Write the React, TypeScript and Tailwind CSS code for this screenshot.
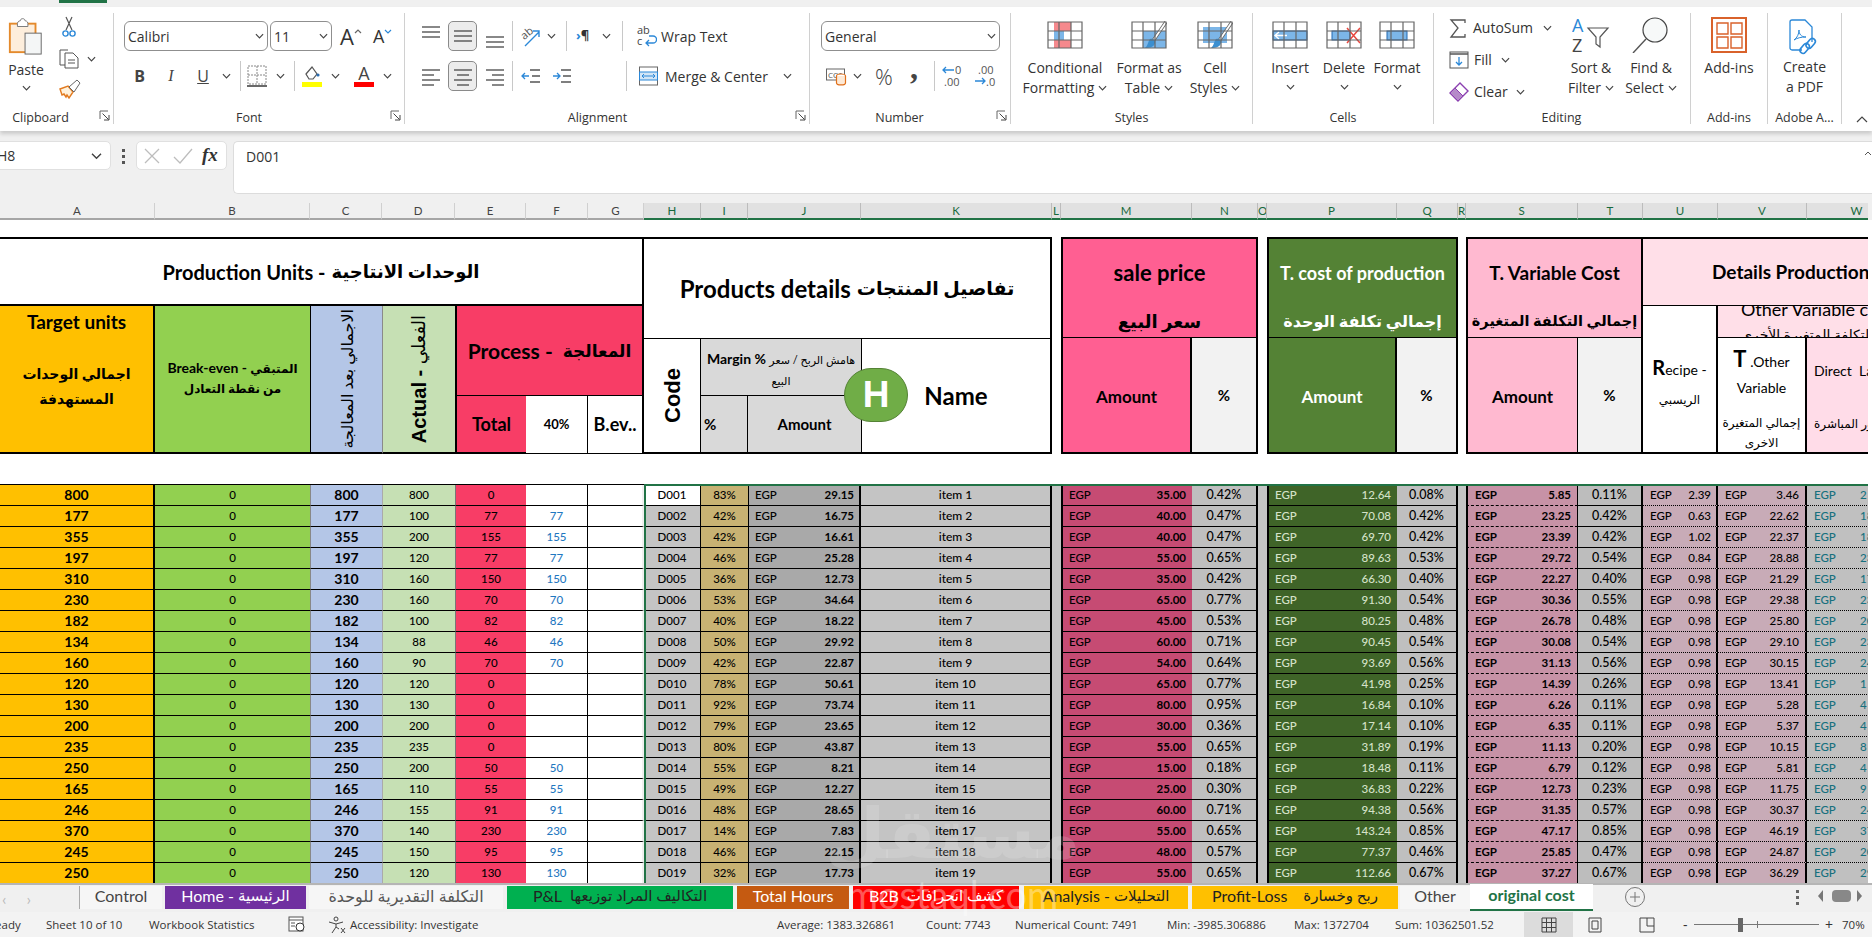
import type { ReactNode } from 'react';

const COLS =
  'grid-cols-[155px_155px_72px_73px_71px_62px_56px_57px_47px_113px_191px_9px_131px_66px_9px_130px_61px_8px_112px_65px_75px_89px_100px]';

const LETTERS: [string, string][] = [
  ['A', 'w-[155px]'], ['B', 'w-[155px]'], ['C', 'w-[72px]'], ['D', 'w-[73px]'], ['E', 'w-[71px]'], ['F', 'w-[62px]'],
  ['G', 'w-[56px]'], ['H', 'w-[57px]'], ['I', 'w-[47px]'], ['J', 'w-[113px]'], ['K', 'w-[191px]'], ['L', 'w-[9px]'],
  ['M', 'w-[131px]'], ['N', 'w-[66px]'], ['O', 'w-[9px]'], ['P', 'w-[130px]'], ['Q', 'w-[61px]'], ['R', 'w-[8px]'],
  ['S', 'w-[112px]'], ['T', 'w-[65px]'], ['U', 'w-[75px]'], ['V', 'w-[89px]'], ['W', 'w-[100px]'],
];

// target, total, actual, process, blue, margin, amount, price, price%, cost, cost%, var, var%, recipe, other, direct
const ROWS: string[][] = [
  ['800', '800', '800', '0', '', '83%', '29.15', '35.00', '0.42%', '12.64', '0.08%', '5.85', '0.11%', '2.39', '3.46', '2'],
  ['177', '177', '100', '77', '77', '42%', '16.75', '40.00', '0.47%', '70.08', '0.42%', '23.25', '0.42%', '0.63', '22.62', '18'],
  ['355', '355', '200', '155', '155', '42%', '16.61', '40.00', '0.47%', '69.70', '0.42%', '23.39', '0.42%', '1.02', '22.37', '18'],
  ['197', '197', '120', '77', '77', '46%', '25.28', '55.00', '0.65%', '89.63', '0.53%', '29.72', '0.54%', '0.84', '28.88', '23'],
  ['310', '310', '160', '150', '150', '36%', '12.73', '35.00', '0.42%', '66.30', '0.40%', '22.27', '0.40%', '0.98', '21.29', '17'],
  ['230', '230', '160', '70', '70', '53%', '34.64', '65.00', '0.77%', '91.30', '0.54%', '30.36', '0.55%', '0.98', '29.38', '23'],
  ['182', '182', '100', '82', '82', '40%', '18.22', '45.00', '0.53%', '80.25', '0.48%', '26.78', '0.48%', '0.98', '25.80', '20'],
  ['134', '134', '88', '46', '46', '50%', '29.92', '60.00', '0.71%', '90.45', '0.54%', '30.08', '0.54%', '0.98', '29.10', '23'],
  ['160', '160', '90', '70', '70', '42%', '22.87', '54.00', '0.64%', '93.69', '0.56%', '31.13', '0.56%', '0.98', '30.15', '24'],
  ['120', '120', '120', '0', '', '78%', '50.61', '65.00', '0.77%', '41.98', '0.25%', '14.39', '0.26%', '0.98', '13.41', '1'],
  ['130', '130', '130', '0', '', '92%', '73.74', '80.00', '0.95%', '16.84', '0.10%', '6.26', '0.11%', '0.98', '5.28', '4'],
  ['200', '200', '200', '0', '', '79%', '23.65', '30.00', '0.36%', '17.14', '0.10%', '6.35', '0.11%', '0.98', '5.37', '4'],
  ['235', '235', '235', '0', '', '80%', '43.87', '55.00', '0.65%', '31.89', '0.19%', '11.13', '0.20%', '0.98', '10.15', '8'],
  ['250', '250', '200', '50', '50', '55%', '8.21', '15.00', '0.18%', '18.48', '0.11%', '6.79', '0.12%', '0.98', '5.81', '4'],
  ['165', '165', '110', '55', '55', '49%', '12.27', '25.00', '0.30%', '36.83', '0.22%', '12.73', '0.23%', '0.98', '11.75', '9'],
  ['246', '246', '155', '91', '91', '48%', '28.65', '60.00', '0.71%', '94.38', '0.56%', '31.35', '0.57%', '0.98', '30.37', '24'],
  ['370', '370', '140', '230', '230', '14%', '7.83', '55.00', '0.65%', '143.24', '0.85%', '47.17', '0.85%', '0.98', '46.19', '37'],
  ['245', '245', '150', '95', '95', '46%', '22.15', '48.00', '0.57%', '77.37', '0.46%', '25.85', '0.47%', '0.98', '24.87', '20'],
  ['250', '250', '120', '130', '130', '32%', '17.73', '55.00', '0.65%', '112.66', '0.67%', '37.27', '0.67%', '0.98', '36.29', '29'],
];

function Chev({ className = '' }: { className?: string }) {
  return (
    <svg viewBox="0 0 10 6" className={`h-[6px] w-[9px] shrink-0 ${className}`}>
      <path d="M1 1l4 4 4-4" fill="none" stroke="#444" strokeWidth="1.3" />
    </svg>
  );
}

function Sep() {
  return <div className="h-[30px] w-px shrink-0 bg-[#c8c8c8]" />;
}

function Launcher() {
  return (
    <svg viewBox="0 0 11 11" className="absolute right-[3px] top-[1px] h-[11px] w-[11px]">
      <path d="M1 9V1h8" fill="none" stroke="#666" />
      <path d="M3.5 3.5L9.5 9.5M5 10h5V5" fill="none" stroke="#444" />
    </svg>
  );
}

function Group({ className, label, labelPad = '', launcher, children }: { className: string; label: string; labelPad?: string; launcher?: boolean; children: ReactNode }) {
  return (
    <section className={`flex h-[111px] shrink-0 flex-col border-r border-[#d0d0d0] ${className}`}>
      <div className="h-[96px] overflow-visible">{children}</div>
      <div className={`relative h-[15px] text-center text-[12.5px] leading-[18px] text-[#333] ${labelPad}`}>
        {label}
        {launcher && <Launcher />}
      </div>
    </section>
  );
}

function BigButton({ className, icon, lines, chevOwnLine }: { className: string; icon: ReactNode; lines: string[]; chevOwnLine?: boolean }) {
  return (
    <div className={`flex shrink-0 flex-col items-center whitespace-nowrap pt-[4px] text-[14px] leading-[20px] text-[#333] ${className}`}>
      <div className="flex h-[38px] items-start">{icon}</div>
      <div className="mt-[3px]">{lines[0]}</div>
      {chevOwnLine ? (
        <Chev className="mt-[6px]" />
      ) : (
        <div className="flex items-center gap-[4px]">
          {lines[1]}
          <Chev />
        </div>
      )}
    </div>
  );
}

function AlignLines({ ys, align, className = '' }: { ys: number[]; align: 'l' | 'c' | 'r' | 'f'; className?: string }) {
  return (
    <svg viewBox="0 0 18 24" className={`h-[24px] w-[18px] shrink-0 ${className}`}>
      {ys.map((y, i) => {
        const short = align !== 'f' && i % 2 === 1;
        const x1 = short && align === 'r' ? 6 : short && align === 'c' ? 3 : 0;
        const x2 = short && align === 'l' ? 12 : short && align === 'c' ? 15 : 18;
        return <path key={y} d={`M${x1} ${y}H${x2}`} stroke="#555" strokeWidth="1.4" />;
      })}
    </svg>
  );
}

function Selected({ children }: { children: ReactNode }) {
  return (
    <div className="ml-[8px] flex h-[30px] w-[29px] shrink-0 items-center justify-center rounded-[5px] border border-[#8a8a8a] bg-[#ececec]">
      {children}
    </div>
  );
}

function SelectBox({ className, text }: { className: string; text: string }) {
  return (
    <div className={`flex h-[30px] shrink-0 items-center justify-between rounded-[6px] border border-[#8f8f8f] bg-white pl-[3px] pr-[3px] text-[14px] text-[#333] ${className}`}>
      {text}
      <Chev />
    </div>
  );
}

function GridIcon({ children }: { children?: ReactNode }) {
  return (
    <svg width="36" height="28" viewBox="0 0 36 28" className="mt-[4px]">
      <rect x="1" y="1" width="34" height="26" fill="#fff" />
      {children}
      <path d="M1 1h34v26H1zM12 1v26M24 1v26M1 10h34M1 19h34" fill="none" stroke="#666" strokeWidth="1.2" />
    </svg>
  );
}

function Brush() {
  return (
    <svg x="10" y="0" width="26" height="28" viewBox="0 0 26 28" overflow="visible">
      <path d="M27 -2L12 20" stroke="#666" strokeWidth="3.4" />
      <path d="M27 -2L12 20" stroke="#fff" strokeWidth="1.8" />
      <path d="M9 18c3-1 6 1 5 4-1 4-5 5-10 5 3-2 3-7 5-9z" fill="#3b8fd0" />
    </svg>
  );
}

function PasteIcon() {
  return (
    <svg width="36" height="38" viewBox="0 0 36 40">
      <rect x="1" y="7" width="27" height="30" fill="#fdeedc" stroke="#e48a2c" strokeWidth="2" />
      <path d="M9 7c0-3 3-3 3-3 0-3 5-3 5 0 0 0 3 0 3 3v3H9z" fill="#fff" stroke="#777" />
      <rect x="17" y="17" width="17" height="22" fill="#f4f6f6" stroke="#666" />
    </svg>
  );
}

function ScissorsIcon() {
  return (
    <svg width="14" height="22" viewBox="0 0 14 22">
      <path d="M4 14L10 1M10 14L4 1" stroke="#555" strokeWidth="1.2" />
      <circle cx="3.5" cy="17.5" r="2.6" fill="none" stroke="#2b88d8" strokeWidth="1.4" />
      <circle cx="10.5" cy="17.5" r="2.6" fill="none" stroke="#2b88d8" strokeWidth="1.4" />
    </svg>
  );
}

function CopyIcon() {
  return (
    <svg width="20" height="21" viewBox="0 0 20 21">
      <path d="M9 2H1v15h5" fill="none" stroke="#555" />
      <path d="M6 5h8l5 5v10H6z" fill="#fff" stroke="#555" />
      <path d="M9 12h7M9 15h7" stroke="#555" />
    </svg>
  );
}

function PainterIcon() {
  return (
    <svg width="22" height="20" viewBox="0 0 22 20">
      <path d="M1 10l8-3 5 6-4 6-2-3-1 2-2-3-2 1z" fill="#fff2dc" stroke="#e27a1f" strokeWidth="1.4" />
      <path d="M10 8l8-7 3 3-6 9z" fill="#fff" stroke="#666" />
    </svg>
  );
}

function GrowFont({ dir }: { dir: 'up' | 'down' }) {
  return (
    <div className={`relative flex h-[30px] items-center font-normal text-[#333] ${dir === 'up' ? 'w-[28px] text-[22px]' : 'w-[22px] text-[18px]'}`}>
      A
      <svg viewBox="0 0 8 5" className="mb-[10px] h-[5px] w-[8px]">
        <path d={dir === 'up' ? 'M1 4l3-3 3 3' : 'M1 1l3 3 3-3'} fill="none" stroke={dir === 'up' ? '#666' : '#2b88d8'} strokeWidth="1.2" />
      </svg>
    </div>
  );
}

function SigmaIcon() {
  return (
    <svg width="18" height="19" viewBox="0 0 18 19">
      <path d="M16 4V1H2l7 8-7 9h14v-3" fill="none" stroke="#555" strokeWidth="1.3" />
    </svg>
  );
}

function FillIcon() {
  return (
    <svg width="20" height="18" viewBox="0 0 20 18">
      <rect x="1" y="1" width="18" height="16" fill="#fff" stroke="#555" />
      <path d="M1 3h18" stroke="#555" strokeWidth="1.5" />
      <path d="M10 6v8M7 11l3 3 3-3" fill="none" stroke="#2b88d8" strokeWidth="1.3" />
    </svg>
  );
}

function ClearIcon() {
  return (
    <svg width="20" height="20" viewBox="0 0 20 20">
      <path d="M1 11L11 1l8 8-10 10z" fill="#fff" stroke="#8b3fb0" strokeWidth="1.4" />
      <path d="M1 11l5-5 8 8-5 5z" fill="#b58ac9" stroke="#8b3fb0" strokeWidth="1" />
    </svg>
  );
}

function SortIcon() {
  return (
    <svg width="38" height="36" viewBox="0 0 38 36">
      <text x="0" y="15" fontSize="18" fill="#2b88d8" fontFamily="Open Sans">A</text>
      <text x="0" y="35" fontSize="18" fill="#444" fontFamily="Open Sans">Z</text>
      <path d="M16 11h20l-8 9v10l-4-3v-7z" fill="#fff" stroke="#555" strokeWidth="1.2" />
    </svg>
  );
}

function FindIcon() {
  return (
    <svg width="38" height="36" viewBox="0 0 38 36">
      <circle cx="23" cy="13" r="12" fill="#f7f9f9" stroke="#444" strokeWidth="1.2" />
      <path d="M14 22L1 36" stroke="#555" strokeWidth="1.4" />
    </svg>
  );
}

function AddinsIcon() {
  return (
    <svg width="36" height="36" viewBox="0 0 36 36">
      <path d="M1 1h34v34H1z" fill="#fff" stroke="#d9622b" strokeWidth="2" />
      <path d="M6 6h11v11H6zM20 6h11v11H20zM6 20h11v11H6zM20 20h11v11H20z" fill="#fff" stroke="#d9622b" strokeWidth="1.4" />
    </svg>
  );
}

function PdfIcon() {
  return (
    <svg width="34" height="36" viewBox="0 0 34 36">
      <path d="M2 3a2 2 0 012-2h13l7 7v15M14 31H4a2 2 0 01-2-2V3" fill="none" stroke="#2b88d8" strokeWidth="1.3" />
      <path d="M6 21c3-2 5-6 5-10 0 4 2 7 7 7-5 0-9 1-12 3z" fill="none" stroke="#2b88d8" />
      <rect x="20" y="19" width="6" height="11" rx="3" transform="rotate(40 23 24)" fill="none" stroke="#2b88d8" strokeWidth="1.6" />
      <rect x="14" y="24" width="6" height="11" rx="3" transform="rotate(40 17 29)" fill="none" stroke="#2b88d8" strokeWidth="1.6" />
    </svg>
  );
}

function Ribbon() {
  return (
    <div className="flex h-[124px] shrink-0 items-start bg-white pt-[6px] shadow-[0_3px_4px_rgba(0,0,0,0.16)] [font-family:'Open_Sans','DejaVu_Sans',sans-serif]">
      <Group className="w-[114px]" label="Clipboard" labelPad="pr-[32px]" launcher>
        <div className="flex">
          <div className="flex w-[52px] flex-col items-center pt-[4px] text-[14px] text-[#333]">
            <PasteIcon />
            <div className="mt-[6px] leading-[18px]">Paste</div>
            <Chev className="mt-[6px]" />
          </div>
          <div className="ml-[7px] flex flex-col pt-[3px]">
            <div className="ml-[3px]"><ScissorsIcon /></div>
            <div className="mt-[10px] flex items-center gap-[8px]"><CopyIcon /><Chev /></div>
            <div className="mt-[10px]"><PainterIcon /></div>
          </div>
        </div>
      </Group>

      <Group className="w-[291px] pl-[10px]" label="Font" labelPad="pr-[30px]" launcher>
        <div className="mt-[8px] flex h-[30px] items-center">
          <SelectBox className="w-[144px]" text="Calibri" />
          <SelectBox className="ml-[2px] w-[62px]" text="11" />
          <div className="ml-[8px]"><GrowFont dir="up" /></div>
          <div className="ml-[5px]"><GrowFont dir="down" /></div>
        </div>
        <div className="mt-[10px] flex h-[30px] items-center text-[16px] text-[#444]">
          <span className="w-[31px] text-center font-bold">B</span>
          <span className="w-[32px] text-center italic [font-family:'Liberation_Serif',serif]">I</span>
          <span className="w-[32px] text-center underline">U</span>
          <Chev className="ml-[3px]" />
          <div className="ml-[9px]"><Sep /></div>
          <svg width="20" height="22" viewBox="0 0 20 22" className="ml-[6px]">
            <path d="M1 1h18v18H1zM10 1v18M1 10h18" fill="none" stroke="#888" strokeDasharray="2 1" />
            <path d="M0 21h20" stroke="#444" strokeWidth="1.6" />
          </svg>
          <Chev className="ml-[9px]" />
          <div className="ml-[9px]"><Sep /></div>
          <div className="ml-[7px] flex w-[20px] flex-col items-center">
            <svg width="18" height="17" viewBox="0 0 18 17">
              <path d="M3 9l6-7 5 7-4 5H6z" fill="#fff" stroke="#555" strokeWidth="1.2" />
              <circle cx="15" cy="10" r="1.6" fill="#2b6cb0" />
            </svg>
            <div className="h-[5px] w-[20px] bg-[#ffff00]" />
          </div>
          <Chev className="ml-[9px]" />
          <div className="ml-[14px] flex w-[20px] flex-col items-center">
            <span className="text-[18px] leading-[17px] text-[#444]">A</span>
            <div className="h-[5px] w-[20px] bg-[#ff0000]" />
          </div>
          <Chev className="ml-[9px]" />
        </div>
      </Group>

      <Group className="w-[405px] pl-[17px]" label="Alignment" labelPad="pr-[36px]" launcher>
        <div className="mt-[8px] flex h-[30px] items-center text-[14px] text-[#333]">
          <AlignLines ys={[3, 8, 13]} align="f" />
          <Selected><AlignLines ys={[7, 12, 17]} align="f" /></Selected>
          <AlignLines ys={[13, 18, 23]} align="f" className="ml-[9px]" />
          <div className="ml-[8px]"><Sep /></div>
          <svg width="20" height="24" viewBox="0 0 20 24" className="ml-[8px]">
            <text x="0" y="13" fontSize="11" fill="#555" transform="rotate(-40 6 10)" fontFamily="Open Sans">ab</text>
            <path d="M4 22L18 8M12 7h6v6" fill="none" stroke="#2b88d8" strokeWidth="1.4" />
          </svg>
          <Chev className="ml-[6px]" />
          <div className="ml-[10px]"><Sep /></div>
          <div className="ml-[9px] flex w-[20px] items-center text-[13px] font-bold"><span className="text-[#2b88d8]">›</span>¶</div>
          <Chev className="ml-[6px]" />
          <div className="ml-[11px]"><Sep /></div>
          <svg width="20" height="24" viewBox="0 0 20 24" className="ml-[14px]">
            <text x="0" y="10" fontSize="11" fill="#444" fontFamily="Open Sans">ab</text>
            <text x="0" y="21" fontSize="11" fill="#444" fontFamily="Open Sans">c</text>
            <path d="M12 12h4a3 3 0 010 7H9M12 16l-3 3 3 3" fill="none" stroke="#2b88d8" strokeWidth="1.3" />
          </svg>
          <span className="ml-[4px]">Wrap Text</span>
        </div>
        <div className="mt-[10px] flex h-[30px] items-center text-[14px] text-[#333]">
          <AlignLines ys={[6, 11, 16, 21]} align="l" />
          <Selected><AlignLines ys={[6, 11, 16, 21]} align="c" /></Selected>
          <AlignLines ys={[6, 11, 16, 21]} align="r" className="ml-[9px]" />
          <div className="ml-[8px]"><Sep /></div>
          <svg width="19" height="18" viewBox="0 0 19 18" className="ml-[8px]">
            <path d="M9 3h10M11 9h8M9 15h10" stroke="#555" strokeWidth="1.3" />
            <path d="M8 9H1M4 6L1 9l3 3" fill="none" stroke="#2b88d8" strokeWidth="1.3" />
          </svg>
          <svg width="18" height="18" viewBox="0 0 18 18" className="ml-[13px]">
            <path d="M8 3h10M10 9h8M8 15h10" stroke="#555" strokeWidth="1.3" />
            <path d="M0 9h7M4 6l3 3-3 3" fill="none" stroke="#2b88d8" strokeWidth="1.3" />
          </svg>
          <div className="ml-[55px]"><Sep /></div>
          <svg width="19" height="20" viewBox="0 0 19 20" className="ml-[12px]">
            <rect x="0.5" y="1" width="18" height="18" fill="#fff" stroke="#666" />
            <rect x="0.5" y="6" width="18" height="8" fill="#d3e6f6" stroke="#2b88d8" />
            <path d="M3 10h13M5 8l-2 2 2 2M14 8l2 2-2 2" fill="none" stroke="#2b88d8" />
          </svg>
          <span className="ml-[7px] w-[118px] whitespace-nowrap">Merge &amp; Center</span>
          <Chev />
        </div>
      </Group>

      <Group className="w-[201px] pl-[11px]" label="Number" labelPad="pr-[32px]" launcher>
        <SelectBox className="mt-[8px] w-[179px]" text="General" />
        <div className="mt-[10px] flex h-[30px] items-center text-[#444]">
          <svg width="21" height="20" viewBox="0 0 21 20" className="ml-[5px]">
            <rect x="0.5" y="3" width="18" height="11" fill="#fff" stroke="#666" />
            <text x="2" y="12" fontSize="8" fill="#555" fontFamily="Open Sans">CC$</text>
            <ellipse cx="15" cy="10" rx="4.5" ry="2" fill="#fff" stroke="#e0701b" strokeWidth="1.2" />
            <path d="M10.5 10v7c0 2.600 9 2.600 9 0v-7" fill="#fde9d6" stroke="#e0701b" strokeWidth="1.2" />
          </svg>
          <Chev className="ml-[6px]" />
          <span className="ml-[13px] w-[22px] text-[22px] font-light leading-none">%</span>
          <span className="-mt-[16px] ml-[13px] w-[14px] text-[32px] font-bold leading-none [font-family:'Liberation_Serif',serif]">,</span>
          <div className="ml-[10px]"><Sep /></div>
          <svg width="22" height="24" viewBox="0 0 22 24" className="ml-[7px]">
            <text x="13" y="10" fontSize="11" fill="#555" fontFamily="Open Sans">0</text>
            <text x="2" y="22" fontSize="11" fill="#555" fontFamily="Open Sans">.00</text>
            <path d="M12 6H1M4 3L1 6l3 3" fill="none" stroke="#2b88d8" strokeWidth="1.3" />
          </svg>
          <svg width="22" height="24" viewBox="0 0 22 24" className="ml-[10px]">
            <text x="4" y="10" fontSize="11" fill="#555" fontFamily="Open Sans">.00</text>
            <text x="12" y="22" fontSize="11" fill="#555" fontFamily="Open Sans">.0</text>
            <path d="M1 17h10M8 14l3 3-3 3" fill="none" stroke="#2b88d8" strokeWidth="1.3" />
          </svg>
        </div>
      </Group>

      <Group className="flex w-[242px]" label="Styles">
        <div className="flex pl-[14px]">
          <BigButton
            className="w-[80px]"
            lines={['Conditional', 'Formatting']}
            icon={
              <GridIcon>
                <rect x="7" y="1" width="17" height="9" fill="#f5898d" />
                <rect x="7" y="10" width="10" height="9" fill="#7cb6e8" />
                <rect x="7" y="19" width="17" height="8" fill="#f5898d" />
              </GridIcon>
            }
          />
          <BigButton
            className="w-[88px]"
            lines={['Format as', 'Table']}
            icon={
              <GridIcon>
                <rect x="12" y="10" width="23" height="17" fill="#7cb6e8" />
                <Brush />
              </GridIcon>
            }
          />
          <BigButton
            className="w-[44px]"
            lines={['Cell', 'Styles']}
            icon={
              <GridIcon>
                <rect x="6" y="6" width="24" height="16" fill="#7cb6e8" />
                <Brush />
              </GridIcon>
            }
          />
        </div>
      </Group>

      <Group className="w-[181px]" label="Cells">
        <div className="flex pl-[10px]">
          <BigButton
            className="w-[54px]"
            lines={['Insert']}
            chevOwnLine
            icon={
              <GridIcon>
                <rect x="1" y="10" width="34" height="9" fill="#7cb6e8" stroke="#2268b0" />
                <path d="M15 14.500H3M7 11l-4 3.500L7 18" fill="none" stroke="#fff" strokeWidth="1.400" />
              </GridIcon>
            }
          />
          <BigButton
            className="w-[54px]"
            lines={['Delete']}
            chevOwnLine
            icon={
              <GridIcon>
                <rect x="6" y="10" width="18" height="9" fill="#7cb6e8" stroke="#2268b0" />
                <path d="M21 7l13 15M34 7L21 22" stroke="#e8473f" strokeWidth="1.500" />
              </GridIcon>
            }
          />
          <BigButton
            className="w-[52px]"
            lines={['Format']}
            chevOwnLine
            icon={
              <GridIcon>
                <rect x="8" y="10" width="20" height="9" fill="#7cb6e8" stroke="#2268b0" />
              </GridIcon>
            }
          />
        </div>
      </Group>

      <Group className="w-[257px] pl-[15px]" label="Editing" labelPad="pr-[16px]">
        <div className="flex">
          <div className="flex w-[117px] flex-col text-[14px] leading-none text-[#333]">
            <div className="mt-[5px] flex h-[20px] items-center">
              <SigmaIcon />
              <span className="ml-[6px] w-[70px]">AutoSum</span>
              <Chev />
            </div>
            <div className="mt-[12px] flex h-[20px] items-center">
              <FillIcon />
              <span className="ml-[5px] w-[27px]">Fill</span>
              <Chev />
            </div>
            <div className="mt-[12px] flex h-[20px] items-center">
              <ClearIcon />
              <span className="ml-[5px] w-[42px]">Clear</span>
              <Chev />
            </div>
          </div>
          <BigButton className="w-[50px]" lines={['Sort &', 'Filter']} icon={<SortIcon />} />
          <BigButton className="w-[70px]" lines={['Find &', 'Select']} icon={<FindIcon />} />
        </div>
      </Group>

      <Group className="w-[77px]" label="Add-ins">
        <div className="flex flex-col items-center whitespace-nowrap pt-[4px] text-[14px] leading-[20px] text-[#333]">
          <AddinsIcon />
          <div className="mt-[5px]">Add-ins</div>
        </div>
      </Group>

      <Group className="w-[74px] whitespace-nowrap" label="Adobe A...">
        <div className="flex flex-col items-center pt-[6px] text-[14px] leading-[20px] text-[#333]">
          <PdfIcon />
          <div className="mt-[2px]">Create</div>
          <div>a PDF</div>
        </div>
      </Group>

      <svg viewBox="0 0 12 7" className="ml-[14px] mt-[103px] h-[7px] w-[12px]">
        <path d="M1 6l5-5 5 5" fill="none" stroke="#444" strokeWidth="1.200" />
      </svg>
    </div>
  );
}

function FormulaBar() {
  return (
    <div className="mt-[10px] flex h-[53px] shrink-0 items-start text-[#333] [font-family:'Open_Sans',sans-serif]">
      <div className="-ml-[6px] flex h-[29px] w-[117px] items-center justify-between rounded-[5px] border border-[#e0e0e0] bg-white pl-[2px] pr-[9px] text-[14px]">
        H8
        <Chev className="scale-125" />
      </div>
      <div className="ml-[11px] mt-[8px] flex w-[3px] flex-col gap-[3px]">
        <div className="h-[3px] bg-[#555]" />
        <div className="h-[3px] bg-[#555]" />
        <div className="h-[3px] bg-[#555]" />
      </div>
      <div className="ml-[11px] flex h-[29px] w-[91px] items-center rounded-[5px] border border-[#e0e0e0] bg-white pl-[7px]">
        <svg width="16" height="16" viewBox="0 0 16 16">
          <path d="M1 1l14 14M15 1L1 15" stroke="#bdbdbd" strokeWidth="1.300" />
        </svg>
        <svg width="20" height="16" viewBox="0 0 20 16" className="ml-[13px]">
          <path d="M1 9l6 6L19 1" fill="none" stroke="#bdbdbd" strokeWidth="1.300" />
        </svg>
        <span className="ml-[9px] text-[19px] font-bold italic [font-family:'Liberation_Serif',serif]">fx</span>
      </div>
      <div className="relative ml-[6px] h-[53px] flex-1 rounded-l-[5px] border border-r-0 border-[#dcdcdc] bg-white pl-[12px] pt-[4px] text-[14px]">
        D001
        <svg viewBox="0 0 8 5" className="absolute right-0 top-[9px] h-[5px] w-[8px]">
          <path d="M1 4l3-3 3 3" fill="none" stroke="#555" />
        </svg>
      </div>
    </div>
  );
}

function ColumnHeaders() {
  return (
    <div className="mt-[9px] flex h-[17px] w-[1868px] shrink-0 overflow-hidden text-[11.5px] leading-[15px]">
      {LETTERS.map(([l, w], i) => (
        <div
          key={l}
          className={`${w} shrink-0 overflow-hidden border-r text-center ${
            i < 7
              ? 'border-[#d0d0d0] border-b-2 border-b-[#a6a6a6] bg-[#f0f0f0] text-[#444]'
              : 'border-[#bcbcbc] border-b-2 border-b-[#217346] bg-[#e1e1e1] text-[#17693c]'
          }`}
        >
          {l}
        </div>
      ))}
    </div>
  );
}

function HeaderTable() {
  return (
    <div className={`relative mt-[17px] grid ${COLS} grid-rows-[69px_32px_58px_58px] text-black`}>
      <div className="col-[1/8] row-[1/2] flex items-center justify-center gap-[6px] border-y-2 border-r-2 border-black bg-white text-[20px] font-bold">
        Production Units - <span className="text-[18px]">الوحدات الانتاجية</span>
      </div>
      <div className="col-[1/2] row-[2/5] flex flex-col items-center border-b-2 border-r-2 border-black bg-[#ffc000] pt-[1px] text-center font-bold">
        <div className="text-[19px] leading-[30px]">Target units</div>
        <div className="mt-[24px] text-[14px] leading-[25px]">اجمالي الوحدات<br />المستهدفة</div>
      </div>
      <div className="col-[2/3] row-[2/5] flex flex-col items-center border-b-2 border-black bg-[#92d050] pt-[52px] text-center text-[12px] font-bold leading-[20px]">
        <div>
          <span className="text-[14px]">Break-even - </span> المتبقي
        </div>
        <div>من نقطة التعادل</div>
      </div>
      <div className="col-[3/4] row-[2/5] flex items-center justify-center border-b-2 border-l border-black bg-[#b4c6e7] text-[16px]">
        <span className="whitespace-nowrap [writing-mode:vertical-rl] rotate-180">الاجمالي بعد المعالجة</span>
      </div>
      <div className="col-[4/5] row-[2/5] flex items-center justify-center border-b-2 border-l border-[#8a8a8a] border-b-black bg-[#c6e0b4] text-[20px] font-bold">
        <span className="whitespace-nowrap [writing-mode:vertical-rl] rotate-180 [font-family:'Liberation_Sans','DejaVu_Sans',sans-serif]">
          Actual - <span className="text-[18px] font-normal">الفعلي</span>
        </span>
      </div>
      <div className="col-[5/8] row-[2/4] flex items-center justify-center gap-[10px] border-b border-l-2 border-r-2 border-black bg-[#f83d66] text-[21px] font-bold">
        Process - <span className="text-[17px]">المعالجة</span>
      </div>
      <div className="col-[5/6] row-[4/5] flex items-center justify-center border-b-2 border-l-2 border-black bg-[#f83d66] text-[18px] font-bold">Total</div>
      <div className="col-[6/7] row-[4/5] flex items-center justify-center border-b border-r border-black bg-white text-[13px] font-bold">40%</div>
      <div className="col-[7/8] row-[4/5] flex items-center justify-center border-b border-r-2 border-black bg-white text-[18px] font-bold">B.ev..</div>

      <div className="col-[8/12] row-[1/3] flex items-center justify-center gap-[6px] border-y-2 border-r-2 border-black border-b-0 bg-white text-[24px] font-bold">
        Products details <span className="text-[19px]">تفاصيل المنتجات</span>
      </div>
      <div className="col-[8/9] row-[3/5] flex items-center justify-center border-y border-r border-black border-b-2 bg-white text-[22px] font-bold">
        <span className="[writing-mode:vertical-rl] rotate-180 [font-family:'Liberation_Sans',sans-serif]">Code</span>
      </div>
      <div className="col-[9/11] row-[3/4] border-y border-black bg-[#d9d9d9] px-[3px] pt-[10px] text-center text-[14px] font-bold leading-[20px]">
        Margin % <span className="text-[11px] font-normal">هامش الربح / سعر البيع</span>
      </div>
      <div className="col-[9/10] row-[4/5] flex items-center border-b-2 border-r border-black bg-[#d9d9d9] pl-[3px] text-[15px] font-bold">%</div>
      <div className="col-[10/11] row-[4/5] flex items-center justify-center border-b-2 border-black bg-[#d9d9d9] text-[15px] font-bold">Amount</div>
      <div className="col-[11/12] row-[3/5] flex items-center justify-center border-y border-x border-black border-b-2 border-r-2 bg-white text-[24px] font-bold">Name</div>

      <div className="col-[13/15] row-[1/3] flex flex-col items-center border-2 border-b border-black bg-[#ff5f92] pt-[19px] font-bold">
        <div className="text-[22px] leading-[30px]">sale price</div>
        <div className="mt-[18px] text-[18px] leading-[30px]">سعر البيع</div>
      </div>
      <div className="col-[13/14] row-[3/5] flex items-center justify-center border-b-2 border-l-2 border-r-2 border-black bg-[#ff5f92] pt-[3px] text-[17px] font-bold">Amount</div>
      <div className="col-[14/15] row-[3/5] flex items-center justify-center border-b-2 border-r-2 border-black bg-[#f2f2f2] text-[15px] font-bold">%</div>

      <div className="col-[16/18] row-[1/3] flex flex-col items-center border-2 border-b border-black bg-[#548235] pt-[19px] font-bold text-white">
        <div className="whitespace-nowrap text-[18px] leading-[30px]">T. cost of production</div>
        <div className="mt-[18px] whitespace-nowrap text-[16px] leading-[30px]">إجمالي تكلفة الوحدة</div>
      </div>
      <div className="col-[16/17] row-[3/5] flex items-center justify-center border-b-2 border-l-2 border-r-2 border-black bg-[#548235] pt-[3px] text-[17px] font-bold text-white">Amount</div>
      <div className="col-[17/18] row-[3/5] flex items-center justify-center border-b-2 border-r-2 border-black bg-[#f2f2f2] text-[15px] font-bold">%</div>

      <div className="col-[19/21] row-[1/3] flex flex-col items-center border-2 border-b border-black bg-[#ffb9d0] pt-[19px] font-bold">
        <div className="whitespace-nowrap text-[19px] leading-[30px]">T. Variable Cost</div>
        <div className="mt-[18px] whitespace-nowrap text-[14.5px] leading-[30px]">إجمالي التكلفة المتغيرة</div>
      </div>
      <div className="col-[19/20] row-[3/5] flex items-center justify-center border-b-2 border-l-2 border-r border-black bg-[#ffb9d0] pt-[3px] text-[17px] font-bold">Amount</div>
      <div className="col-[20/21] row-[3/5] flex items-center justify-center border-b-2 border-r-2 border-black bg-[#f2f2f2] text-[15px] font-bold">%</div>

      <div className="col-[21/24] row-[1/2] flex items-center whitespace-nowrap border-b border-t-2 border-black bg-[#ffdfe8] pl-[69px] text-[19px] font-bold">Details Production Cost</div>
      <div className="col-[21/22] row-[2/5] flex flex-col items-center justify-center border-b-2 border-r-2 border-black bg-white pt-[8px] text-center text-[14px] leading-[30px]">
        <div><span className="text-[20px] font-bold">R</span>ecipe -</div>
        <div className="text-[12px]">الريسبي</div>
      </div>
      <div className="col-[22/24] row-[2/3] overflow-hidden whitespace-nowrap border-b border-black bg-[#ffdfe8] pl-[23px] text-[18px] leading-[26px]">
        <div className="-mt-[10px]">Other Variable cost</div>
        <div className="text-[14px]">التكلفة المتغيرة الأخرى</div>
      </div>
      <div className="col-[22/23] row-[3/5] flex flex-col items-center border-b-2 border-r-2 border-black bg-white pt-[8px] text-center text-[14px] leading-[26px]">
        <div><span className="text-[22px] font-bold">T</span> .Other</div>
        <div>Variable</div>
        <div className="mt-[12px] whitespace-nowrap text-[12px] leading-[20px]">إجمالي المتغيرة<br />الاخرى</div>
      </div>
      <div className="col-[23/24] row-[3/5] flex flex-col whitespace-nowrap border-b-2 border-black bg-[#ffdce8] pl-[7px] pt-[22px] text-[14px]">
        <div>Direct &nbsp;Labor</div>
        <div className="mt-[34px] text-[12px]">الأجور المباشرة</div>
      </div>

      {/* floating badge sitting over the header cells */}
      <div className="absolute left-[844px] top-[131px] flex h-[54px] w-[64px] items-center justify-center rounded-full border border-[#548235] bg-[#70ad47] text-[37px] font-bold text-white [font-family:'Liberation_Sans',sans-serif]">
        H
      </div>
    </div>
  );
}

function DataRow({ row, index }: { row: string[]; index: number }) {
  const [target, total, actual, process, blue, margin, amount, price, pricePct, cost, costPct, variable, varPct, recipe, other, direct] = row;
  const rowLine = 'border-b border-black';
  const center = 'flex items-center justify-center';
  const money = 'flex items-center justify-between';
  return (
    <div className={`grid ${COLS} h-[21px] grid-rows-[21px] text-[11.5px] font-medium leading-none text-black`}>
      <div className={`${center} ${rowLine} border-r-2 bg-[#ffc000] text-[14px] font-bold`}>{target}</div>
      <div className={`${center} ${rowLine} bg-[#92d050]`}>0</div>
      <div className={`${center} ${rowLine} border-l border-l-[#888] bg-[#b4c6e7] text-[14px] font-bold`}>{total}</div>
      <div className={`${center} ${rowLine} border-l border-l-[#aaa] bg-[#c6e0b4]`}>{actual}</div>
      <div className={`${center} ${rowLine} border-l border-l-[#777] bg-[#f83d66]`}>{process}</div>
      <div className={`${center} ${rowLine} border-r bg-white text-[#1f78c1]`}>{blue}</div>
      <div className={`${rowLine} border-r-2 border-r-[#f0f0f0] bg-white`} />
      <div className={`${center} ${rowLine} border-r ${index === 0 ? 'bg-white' : 'bg-[#c4c4c4]'}`}>{`D${String(index + 1).padStart(3, '0')}`}</div>
      <div className={`${center} ${rowLine} bg-[#c8b273]`}>{margin}</div>
      <div className={`${money} ${rowLine} border-l border-r-2 bg-[#a9a9a9] pl-[6px] pr-[5px] font-bold`}>
        <span className="font-medium">EGP</span>
        {amount}
      </div>
      <div className={`${center} ${rowLine} border-r-2 bg-[#c4c4c4] text-[12px]`}>item {index + 1}</div>
      <div className="bg-[#c4c4c4]" />
      <div className={`${money} ${rowLine} border-l-2 bg-[#c64b73] pl-[6px] pr-[6px] font-bold`}>
        <span className="font-medium">EGP</span>
        {price}
      </div>
      <div className={`${center} ${rowLine} border-r-2 bg-[#bfbfbf] text-[12.5px]`}>{pricePct}</div>
      <div className="bg-[#c4c4c4]" />
      <div className={`${money} ${rowLine} border-l-2 bg-[#3f6428] pl-[6px] pr-[6px] text-[#d5e2c8]`}>
        <span>EGP</span>
        {cost}
      </div>
      <div className={`${center} ${rowLine} border-r-2 bg-[#bfbfbf] text-[12.5px]`}>{costPct}</div>
      <div className="bg-[#c4c4c4]" />
      <div className={`${money} border-b border-dashed border-b-black border-l-2 border-r border-l-black border-r-black bg-[#c792a6] [border-left-style:solid] [border-right-style:solid] pl-[7px] pr-[6px] font-bold`}>
        <span>EGP</span>
        {variable}
      </div>
      <div className={`${center} ${rowLine} border-r-2 bg-[#bdbdbd] text-[12.5px]`}>{varPct}</div>
      <div className={`${money} border-b border-r-2 border-dotted border-b-black border-r-black bg-[#c8abb7] [border-right-style:solid] pl-[7px] pr-[5px]`}>
        <span>EGP</span>
        {recipe}
      </div>
      <div className={`${money} border-b border-r-2 border-dotted border-b-black border-r-black bg-[#c8abb7] [border-right-style:solid] pl-[7px] pr-[6px]`}>
        <span>EGP</span>
        {other}
      </div>
      <div className="flex items-center border-b border-dotted border-b-black bg-[#c0c0c0] pl-[7px] text-[#17707e]">
        <span className="w-[46px]">EGP</span>
        {direct}
      </div>
    </div>
  );
}

function Sheet() {
  return (
    <div className="relative h-[663px] w-full shrink-0 overflow-hidden bg-white">
      <div className="h-[663px] w-[1868px] overflow-hidden">
        <HeaderTable />
        <div className="relative mt-[30px] border-t border-black">
          {ROWS.map((row, i) => (
            <DataRow key={row[5] + row[6]} row={row} index={i} />
          ))}
          {/* selection outline lying over the cells */}
          <div className="pointer-events-none absolute -top-px bottom-0 left-[644px] right-0 border-l-2 border-t-2 border-[#217346]" />
        </div>
      </div>
    </div>
  );
}

function Tab({ className, children }: { className: string; children: ReactNode }) {
  return (
    <div className={`flex h-[23px] shrink-0 items-center justify-center whitespace-nowrap pb-[4px] text-[16px] leading-none ${className}`}>
      {children}
    </div>
  );
}

function TabBar() {
  return (
    <div className="flex h-[29px] shrink-0 border-t-2 border-[#b5b5b5] bg-[#f0f0f0] pt-px text-[#333]">
      <div className="flex w-[79px] shrink-0 items-start gap-[20px] pl-[2px] pt-[5px] text-[16px] leading-none text-[#bbb]">
        <span>‹</span>
        <span>›</span>
      </div>
      <Tab className="w-[83px] border-l border-[#aaa] bg-[#f6f6f6] text-[#444]">Control</Tab>
      <Tab className="ml-[3px] w-[141px] bg-[#7030a0] text-white">Home - <span className="ml-1 text-[15px]">الرئيسية</span></Tab>
      <Tab className="ml-[3px] w-[194px] bg-[#f6f6f6] text-[15px] text-[#555]">التكلفة التقديرية للوحدة</Tab>
      <Tab className="ml-[4px] w-[226px] bg-[#00b050] text-[#222]">P&amp;L <span className="ml-2 text-[15px]">التكاليف المراد توزيعها</span></Tab>
      <Tab className="ml-[4px] w-[112px] bg-[#c55a11] text-white">Total Hours</Tab>
      <Tab className="ml-[4px] w-[166px] bg-[#ff0000] text-white">B2B <span className="ml-2 text-[15px]">كشف انحرافات</span></Tab>
      <Tab className="ml-[5px] w-[164px] bg-[#ffc000] text-[#222]">Analysis - <span className="ml-1 text-[15px]">التحليلات</span></Tab>
      <Tab className="ml-[4px] w-[206px] bg-[#ffc000] text-[#222]">Profit-Loss <span className="ml-4 text-[15px]">ربح وخسارة</span></Tab>
      <Tab className="ml-[2px] w-[70px] bg-[#f6f6f6] text-[#444]">Other</Tab>
      <div className="-mt-[2px] flex h-[27px] w-[123px] shrink-0 items-center justify-center whitespace-nowrap border-b-2 border-[#217346] bg-white pb-[3px] text-[16px] font-bold text-[#217346]">
        original cost
      </div>
      <svg width="22" height="22" viewBox="0 0 22 22" className="ml-[31px]">
        <circle cx="11" cy="11" r="9.500" fill="none" stroke="#777" />
        <path d="M11 6v10M6 11h10" stroke="#777" />
      </svg>
      <div className="ml-[150px] mt-[4px] flex w-[3px] shrink-0 flex-col gap-[3px]">
        <div className="h-[3px] bg-[#666]" />
        <div className="h-[3px] bg-[#666]" />
        <div className="h-[3px] bg-[#666]" />
      </div>
      <svg width="48" height="20" viewBox="0 0 48 20" className="ml-[17px]">
        <path d="M7 4L2 10l5 6z" fill="#777" />
        <rect x="16" y="4" width="19" height="12" rx="4" fill="#888" />
        <path d="M41 4l5 6-5 6z" fill="#777" />
      </svg>
    </div>
  );
}

function StatusBar() {
  return (
    <div className="flex h-[25px] shrink-0 items-center whitespace-nowrap bg-[#f3f3f3] text-[11.5px] text-[#333] [font-family:'Open_Sans',sans-serif]">
      <span className="-ml-[12px] w-[58px]">Ready</span>
      <span className="w-[103px]">Sheet 10 of 10</span>
      <span className="w-[139px]">Workbook Statistics</span>
      <svg width="18" height="17" viewBox="0 0 18 17">
        <rect x="1" y="1" width="14" height="14" fill="#fff" stroke="#555" />
        <path d="M1 4h14M3 7h4M3 10h4" stroke="#555" />
        <circle cx="12" cy="11" r="4" fill="#fff" stroke="#333" />
      </svg>
      <svg width="18" height="18" viewBox="0 0 18 18" className="ml-[22px]">
        <circle cx="8" cy="3" r="2" fill="none" stroke="#444" />
        <path d="M1 6l7 2 7-2M8 8v3l-4 6M8 11l3 2M13 12l4 5M17 12l-4 5" fill="none" stroke="#444" />
      </svg>
      <span className="ml-[4px] w-[427px]">Accessibility: Investigate</span>
      <span className="w-[149px]">Average: 1383.326861</span>
      <span className="w-[89px]">Count: 7743</span>
      <span className="w-[152px]">Numerical Count: 7491</span>
      <span className="w-[127px]">Min: -3985.306886</span>
      <span className="w-[101px]">Max: 1372704</span>
      <span className="w-[129px]">Sum: 10362501.52</span>
      <div className="flex h-[25px] w-[49px] items-center justify-center bg-[#dcdcdc]">
        <svg width="16" height="16" viewBox="0 0 16 16">
          <path d="M1 1h14v14H1zM5.500 1v14M10.500 1v14M1 5.500h14M1 10.500h14" fill="none" stroke="#444" />
        </svg>
      </div>
      <svg width="14" height="16" viewBox="0 0 14 16" className="ml-[15px]">
        <path d="M1 1h12v14H1zM4 4h6v8H4z" fill="none" stroke="#444" />
      </svg>
      <svg width="16" height="16" viewBox="0 0 16 16" className="ml-[37px]">
        <path d="M1 1h14v14H1V1M8 1v8h7" fill="none" stroke="#444" />
      </svg>
      <span className="ml-[28px] w-[9px] text-[14px]">-</span>
      {/* zoom slider, thumb and centre tick lie over the track */}
      <div className="relative ml-[2px] h-[14px] w-[125px]">
        <div className="absolute left-0 right-0 top-[6px] h-px bg-[#777]" />
        <div className="absolute left-[44px] top-0 h-[14px] w-[5px] bg-[#666]" />
        <div className="absolute left-[63px] top-[3px] h-[7px] w-px bg-[#777]" />
      </div>
      <span className="ml-[6px] w-[14px] text-[14px]">+</span>
      <span className="ml-[3px]">70%</span>
    </div>
  );
}

export default function App() {
  return (
    <div className="relative flex h-[937px] w-[1872px] flex-col overflow-hidden bg-[#f0f0f0] [font-family:Lato,'DejaVu_Sans',sans-serif]">
      <div className="h-[7px] shrink-0 bg-[#f0f0f0]">
        <div className="ml-[59px] h-[3px] w-[48px] bg-[#217346]" />
      </div>
      <Ribbon />
      <FormulaBar />
      <ColumnHeaders />
      <Sheet />
      <TabBar />
      <StatusBar />

      {/* site watermark stamped over the screenshot */}
      <div className="pointer-events-none absolute left-[850px] top-[788px] flex w-[205px] flex-col items-center">
        <span className="text-[70px] font-bold leading-[86px] text-white/15">مستقل</span>
        <span className="-mt-[2px] text-[38px] leading-[44px] text-white/35">mostaql.com</span>
      </div>
    </div>
  );
}
